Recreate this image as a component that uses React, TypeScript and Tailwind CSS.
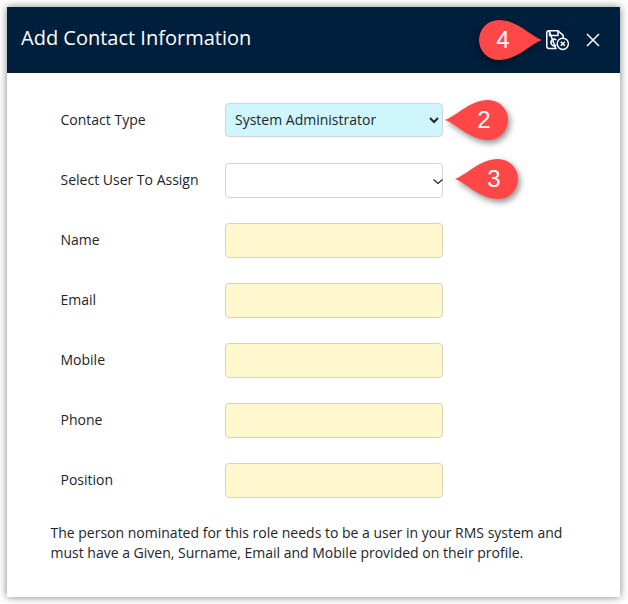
import React from 'react';

const textFields = ['Name', 'Email', 'Mobile', 'Phone', 'Position'];

// Red callout marker from the help screenshot
function Callout({ value, flip, className }: { value: number; flip?: boolean; className: string }) {
  return (
    <div className={`absolute h-10 w-[63px] ${className}`}>
      <svg
        viewBox="0 0 63 40"
        className={`absolute inset-0 h-10 w-[63px] overflow-visible drop-shadow-[2px_3px_3px_rgba(0,0,0,0.45)] ${flip ? '-scale-x-100' : ''}`}
      >
        <path d="M0 20C13 15 25 0 43 0A20 20 0 0 1 43 40C25 40 13 25 0 20Z" fill="#FF4747" />
      </svg>
      <span
        className={`absolute top-0 flex h-10 w-10 items-center justify-center font-['Liberation_Sans',Arial,sans-serif] text-2xl text-white ${
          flip ? 'left-1' : 'right-1'
        }`}
      >
        {value}
      </span>
    </div>
  );
}

function SaveCloseIcon() {
  return (
    <svg viewBox="0 0 24 21" className="h-[21px] w-6" fill="none" stroke="white" strokeWidth="1.5">
      <path d="M3 .8H12L17.2 5.4V8M9.8 18.4H3A2.2 2.2 0 0 1 .8 16.2V3A2.2 2.2 0 0 1 3 .8Z" />
      <path d="M3.6 1V5.4H12V1" />
      <path d="M10.2 10A3.2 3.2 0 1 0 10.2 15" />
      <circle cx="16.8" cy="13.8" r="5.6" />
      <path d="M14.8 11.8L18.8 15.8M18.8 11.8L14.8 15.8" strokeWidth="1.6" />
    </svg>
  );
}

function Row({ label, children }: { label: string; children: React.ReactNode }) {
  return (
    <div className="flex h-[35px] items-center">
      <label className="w-[164.5px] pb-0.5 text-sm text-[#212529]">{label}</label>
      {children}
    </div>
  );
}

export default function App() {
  return (
    <div className="h-[604px] w-[628px] overflow-hidden bg-white pl-[7px] pt-[7px] font-['Open_Sans',sans-serif]">
      <div className="relative h-[590px] w-[613px] bg-white shadow-[0_0_8px_rgba(0,0,0,0.5)]">
        {/* Header */}
        <div className="flex h-[66px] items-center bg-[#001F3D] pl-3.5 pr-5 text-white">
          <h2 className="mb-1 flex-1 text-xl">Add Contact Information</h2>
          <button type="button" className="mr-4 mt-px">
            <SaveCloseIcon />
          </button>
          <svg viewBox="0 0 14 14" className="h-3.5 w-3.5" fill="none" stroke="white" strokeWidth="1.5">
            <path d="M1 1L13 13M13 1L1 13" />
          </svg>
        </div>

        {/* Form */}
        <div className="flex flex-col gap-[25px] pl-[53.5px] pt-[30px]">
          <Row label="Contact Type">
            <select className="mb-px h-[34px] w-[218px] rounded border border-[#CED4DA] bg-[#CFF6FC] pb-0.5 pl-[5px] text-sm text-[#212529]">
              <option>System Administrator</option>
            </select>
          </Row>
          <Row label="Select User To Assign">
            <div className="relative">
              <select className="block h-[35px] w-[218px] appearance-none rounded border border-[#D5D5D5] bg-white text-sm">
                <option></option>
              </select>
              <svg
                viewBox="0 0 10 5"
                className="absolute right-[0.5px] top-[16px] h-[5px] w-[10px]"
                fill="none"
                stroke="#1F2A44"
                strokeWidth="1.2"
              >
                <path d="M.5 .5L5 4.5L9.5 .5" />
              </svg>
            </div>
          </Row>
          {textFields.map((field) => (
            <Row key={field} label={field}>
              <input type="text" className="h-[35px] w-[218px] rounded border border-[#D8D4B8] bg-[#FFF8CF]" />
            </Row>
          ))}
        </div>

        <p className="ml-[43.5px] mt-[25px] w-[530px] text-sm leading-5 text-[#212529]">
          The person nominated for this role needs to be a user in your RMS system and must have a Given, Surname,
          Email and Mobile provided on their profile.
        </p>

        <Callout value={4} flip className="left-[472px] top-[13px]" />
        <Callout value={2} className="left-[438px] top-[93px]" />
        <Callout value={3} className="left-[448px] top-[152px]" />
      </div>
    </div>
  );
}
